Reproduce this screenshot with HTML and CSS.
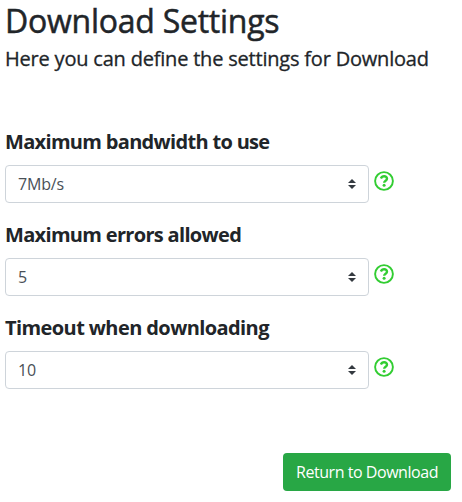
FILE: index.html
```html
<!DOCTYPE html>
<html lang="en">
<head>
<meta charset="utf-8">
<title>Download Settings</title>
<link rel="stylesheet" href="styles.css">
</head>
<body>
<svg class="defs" width="0" height="0" aria-hidden="true">
  <symbol id="help" viewBox="0 0 20 20">
    <circle cx="10" cy="10" r="8.9" fill="none" stroke="currentColor" stroke-width="1.9"/>
    <path d="M6.9 7.5C7.5 6 8.6 5.3 10.1 5.3c1.8 0 2.9 1 2.9 2.4 0 2-2.8 2.1-2.8 4.1" fill="none" stroke="currentColor" stroke-width="2.4"/>
    <circle cx="10.1" cy="14.2" r="1.5" fill="currentColor"/>
  </symbol>
  <symbol id="arrows" viewBox="0 0 8 10">
    <path d="M4 0L0 4h8zM4 10L0 6h8z" fill="#343a40"/>
  </symbol>
</svg>
<main class="page">
  <h2 class="title">Download Settings</h2>
  <h5 class="subtitle">Here you can define the settings for Download</h5>
  <form class="form">
    <section class="group">
      <h5 class="label">Maximum bandwidth to use</h5>
      <div class="row">
        <div class="select"><span>7Mb/s</span><svg class="arrows"><use href="#arrows"/></svg></div>
        <svg class="help"><use href="#help"/></svg>
      </div>
    </section>
    <section class="group">
      <h5 class="label">Maximum errors allowed</h5>
      <div class="row">
        <div class="select"><span>5</span><svg class="arrows"><use href="#arrows"/></svg></div>
        <svg class="help"><use href="#help"/></svg>
      </div>
    </section>
    <section class="group">
      <h5 class="label timeout">Timeout when downloading</h5>
      <div class="row">
        <div class="select"><span>10</span><svg class="arrows"><use href="#arrows"/></svg></div>
        <svg class="help"><use href="#help"/></svg>
      </div>
    </section>
  </form>
  <button class="button" type="button">Return to Download</button>
</main>
</body>
</html>
```

FILE: styles.css
```css
* { box-sizing: border-box; }
body {
  margin: 0;
  background: #fff;
  color: #212529;
  font: 400 16px/24px "Segoe UI", "Open Sans", "Noto Sans", sans-serif;
}
.defs { position: absolute; }
.page {
  display: flex;
  flex-direction: column;
  width: 462px;
  padding: 2px 11px 0 5px;
}
h2, h5 { margin: 0; white-space: nowrap; }
.title {
  font-size: 32px;
  line-height: 38px;
  font-weight: 500;
  letter-spacing: -0.25px;
  -webkit-text-stroke: 0.5px currentColor;
}
.subtitle {
  margin-top: 7px;
  font-size: 20px;
  line-height: 24px;
  font-weight: 500;
  letter-spacing: -0.2px;
  -webkit-text-stroke: 0.3px currentColor;
}
.form { display: flex; flex-direction: column; gap: 19px; margin-top: 58px; }
.group { display: flex; flex-direction: column; gap: 11px; }
.label { font-size: 20px; line-height: 25px; font-weight: 700; letter-spacing: -0.68px; }
.timeout { letter-spacing: -0.59px; }
.row { display: flex; gap: 5px; }
.select {
  display: flex;
  align-items: center;
  justify-content: space-between;
  width: 364px;
  height: 38px;
  padding: 0 12px;
  border: 1px solid #ced4da;
  border-radius: 4px;
  color: #495057;
  letter-spacing: -0.2px;
}
.arrows { width: 8px; height: 10px; }
.help { width: 20px; height: 20px; margin-top: 6px; color: #32cd32; }
.button {
  align-self: flex-end;
  width: 168px;
  height: 38px;
  margin-top: 64px;
  padding: 0;
  border: 0;
  border-radius: 4px;
  background: #28a745;
  color: #fff;
  font: inherit;
  letter-spacing: -0.45px;
  white-space: nowrap;
}
```
